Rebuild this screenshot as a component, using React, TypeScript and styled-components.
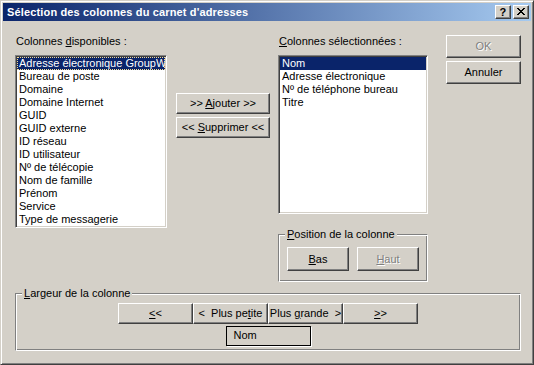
import React from "react";
import styled, { createGlobalStyle, css } from "styled-components";

const GlobalStyle = createGlobalStyle`
  html, body {
    margin: 0;
    padding: 0;
    background: #d4d0c8;
  }
  body {
    font-family: "Liberation Sans", Arial, sans-serif;
    font-size: 11px;
    color: #000;
  }
  * {
    box-sizing: border-box;
  }
`;

const Window = styled.div`
  width: 534px;
  height: 365px;
  background: #d4d0c8;
  border: 1px solid;
  border-color: #d4d0c8 #404040 #404040 #d4d0c8;
  box-shadow: inset 1px 1px #fff, inset -1px -1px #808080;
  padding: 2px;
  display: flex;
  flex-direction: column;
`;

const TitleBar = styled.div`
  height: 18px;
  flex-shrink: 0;
  display: flex;
  align-items: center;
  padding: 0 2px;
  background: linear-gradient(to right, #0a246a, #a6caf0);
  color: #fff;
  font-weight: bold;
  font-size: 11px;
  letter-spacing: 0.15px;
`;

const Title = styled.span`
  margin-left: 2px;
  white-space: nowrap;
`;

const TitleButtons = styled.div`
  margin-left: auto;
  display: flex;
  gap: 2px;
`;

const raised = css`
  background: #d4d0c8;
  border: 1px solid;
  border-color: #fff #404040 #404040 #fff;
  box-shadow: inset -1px -1px #808080;
`;

const TitleButton = styled.div`
  ${raised};
  width: 16px;
  height: 14px;
  display: flex;
  align-items: center;
  justify-content: center;
  color: #000;
  font-size: 11px;
  font-weight: bold;
  line-height: 12px;
  padding-bottom: 1px;
`;

const Body = styled.div`
  padding: 14px 0 0 12px;
  display: flex;
  flex-direction: column;
`;

const TopRow = styled.div`
  display: flex;
  align-items: flex-start;
`;

const Column = styled.div<{ $width: number; $left?: number; $top?: number; $gap?: number }>`
  width: ${(p) => p.$width}px;
  margin-left: ${(p) => p.$left ?? 0}px;
  margin-top: ${(p) => p.$top ?? 0}px;
  display: flex;
  flex-direction: column;
  gap: ${(p) => p.$gap ?? 0}px;
`;

const Label = styled.div`
  height: 13px;
  line-height: 13px;
  padding-left: 1px;
  white-space: nowrap;
`;

const Key = styled.u`
  text-decoration: underline;
  text-underline-offset: 1px;
`;

const ListBox = styled.div<{ $height: number }>`
  margin-top: 7px;
  height: ${(p) => p.$height}px;
  background: #fff;
  border: 1px solid;
  border-color: #808080 #fff #fff #808080;
  box-shadow: inset 1px 1px #404040, inset -1px -1px #d4d0c8;
  padding: 1px;
  overflow: hidden;
`;

const Item = styled.div<{ $selected?: boolean; $focused?: boolean }>`
  height: 13px;
  line-height: 13px;
  padding-left: 2px;
  white-space: nowrap;
  overflow: hidden;
  ${(p) =>
    p.$selected &&
    css`
      background: #0a246a;
      color: #fff;
    `}
  ${(p) =>
    p.$focused &&
    css`
      outline: 1px dotted #f5db95;
      outline-offset: -1px;
    `}
`;

const ButtonFrame = styled.div<{ $width: number; $height: number; $disabled?: boolean }>`
  ${raised};
  width: ${(p) => p.$width}px;
  height: ${(p) => p.$height}px;
  flex-shrink: 0;
  display: flex;
  align-items: center;
  justify-content: center;
  white-space: pre;
  padding-bottom: 1px;
  ${(p) =>
    p.$disabled &&
    css`
      color: #808080;
      text-shadow: 1px 1px #fff;
    `}
`;

const Caption = styled.span`
  white-space: pre;
`;

function PushButton({
  width,
  height,
  disabled,
  children,
}: {
  width: number;
  height: number;
  disabled?: boolean;
  children: React.ReactNode;
}) {
  return (
    <ButtonFrame $width={width} $height={height} $disabled={disabled}>
      <Caption>{children}</Caption>
    </ButtonFrame>
  );
}

const GroupBox = styled.div<{ $width: number; $height: number; $top: number }>`
  position: relative;
  width: ${(p) => p.$width}px;
  height: ${(p) => p.$height}px;
  margin-top: ${(p) => p.$top}px;
  border: 1px solid;
  border-color: #808080 #fff #fff #808080;
  box-shadow: inset 1px 1px #fff, inset -1px -1px #808080;
`;

const Legend = styled.div`
  position: absolute;
  top: -7px;
  left: 6px;
  padding: 0 2px;
  height: 13px;
  line-height: 13px;
  background: #d4d0c8;
  white-space: nowrap;
`;

const PositionRow = styled.div`
  display: flex;
  gap: 8px;
  padding: 12px 0 0 8px;
`;

const WidthContent = styled.div`
  display: flex;
  flex-direction: column;
  align-items: center;
  padding-top: 9px;
  gap: 2px;
`;

const ButtonStrip = styled.div`
  display: flex;
`;

const ValueBox = styled.div`
  width: 85px;
  height: 20px;
  border: 1px solid #000;
  box-shadow: 1px 1px #fff;
  line-height: 17px;
  padding-left: 7px;
`;

const CloseIcon = () => (
  <svg width="8" height="7" viewBox="0 0 8 7" shapeRendering="crispEdges">
    <g fill="#000">
      <rect x="0" y="0" width="2" height="1" />
      <rect x="6" y="0" width="2" height="1" />
      <rect x="1" y="1" width="2" height="1" />
      <rect x="5" y="1" width="2" height="1" />
      <rect x="2" y="2" width="4" height="1" />
      <rect x="3" y="3" width="2" height="1" />
      <rect x="2" y="4" width="4" height="1" />
      <rect x="1" y="5" width="2" height="1" />
      <rect x="5" y="5" width="2" height="1" />
      <rect x="0" y="6" width="2" height="1" />
      <rect x="6" y="6" width="2" height="1" />
    </g>
  </svg>
);

const available = [
  "Adresse électronique GroupWise",
  "Bureau de poste",
  "Domaine",
  "Domaine Internet",
  "GUID",
  "GUID externe",
  "ID réseau",
  "ID utilisateur",
  "Nº de télécopie",
  "Nom de famille",
  "Prénom",
  "Service",
  "Type de messagerie",
];

const selected = ["Nom", "Adresse électronique", "Nº de téléphone bureau", "Titre"];

export default function App() {
  return (
    <>
      <GlobalStyle />
      <Window>
        <TitleBar>
          <Title>Sélection des colonnes du carnet d'adresses</Title>
          <TitleButtons>
            <TitleButton>?</TitleButton>
            <TitleButton>
              <CloseIcon />
            </TitleButton>
          </TitleButtons>
        </TitleBar>
        <Body>
          <TopRow>
            <Column $width={152}>
              <Label>
                Colonnes <Key>d</Key>isponibles :
              </Label>
              <ListBox $height={173}>
                {available.map((name, i) => (
                  <Item key={name} $selected={i === 0} $focused={i === 0}>
                    {name}
                  </Item>
                ))}
              </ListBox>
            </Column>

            <Column $width={94} $left={9} $top={58} $gap={3}>
              <PushButton width={94} height={21}>
                {">> "}
                <Key>A</Key>
                {"jouter >>"}
              </PushButton>
              <PushButton width={94} height={21}>
                {"<< "}
                <Key>S</Key>
                {"upprimer <<"}
              </PushButton>
            </Column>

            <Column $width={150} $left={8}>
              <Label>
                <Key>C</Key>olonnes sélectionnées :
              </Label>
              <ListBox $height={159}>
                {selected.map((name, i) => (
                  <Item key={name} $selected={i === 0}>
                    {name}
                  </Item>
                ))}
              </ListBox>
              <GroupBox $width={150} $height={48} $top={20}>
                <Legend>
                  <Key>P</Key>osition de la colonne
                </Legend>
                <PositionRow>
                  <PushButton width={62} height={24}>
                    <Key>B</Key>
                    {"as"}
                  </PushButton>
                  <PushButton width={62} height={24} disabled>
                    <Key>H</Key>
                    {"aut"}
                  </PushButton>
                </PositionRow>
              </GroupBox>
            </Column>

            <Column $width={75} $left={18} $gap={3}>
              <PushButton width={75} height={23} disabled>
                OK
              </PushButton>
              <PushButton width={75} height={23}>
                Annuler
              </PushButton>
            </Column>
          </TopRow>

          <GroupBox $width={506} $height={58} $top={11}>
            <Legend>
              <Key>L</Key>argeur de la colonne
            </Legend>
            <WidthContent>
              <ButtonStrip>
                <PushButton width={75} height={21}>
                  <Key>{"<"}</Key>
                  {"<"}
                </PushButton>
                <PushButton width={75} height={21}>
                  {"<  Plus pe"}
                  <Key>t</Key>
                  {"ite"}
                </PushButton>
                <PushButton width={75} height={21}>
                  {"Plus "}
                  <Key>g</Key>
                  {"rande  >"}
                </PushButton>
                <PushButton width={75} height={21}>
                  <Key>{">"}</Key>
                  {">"}
                </PushButton>
              </ButtonStrip>
              <ValueBox>Nom</ValueBox>
            </WidthContent>
          </GroupBox>
        </Body>
      </Window>
    </>
  );
}
